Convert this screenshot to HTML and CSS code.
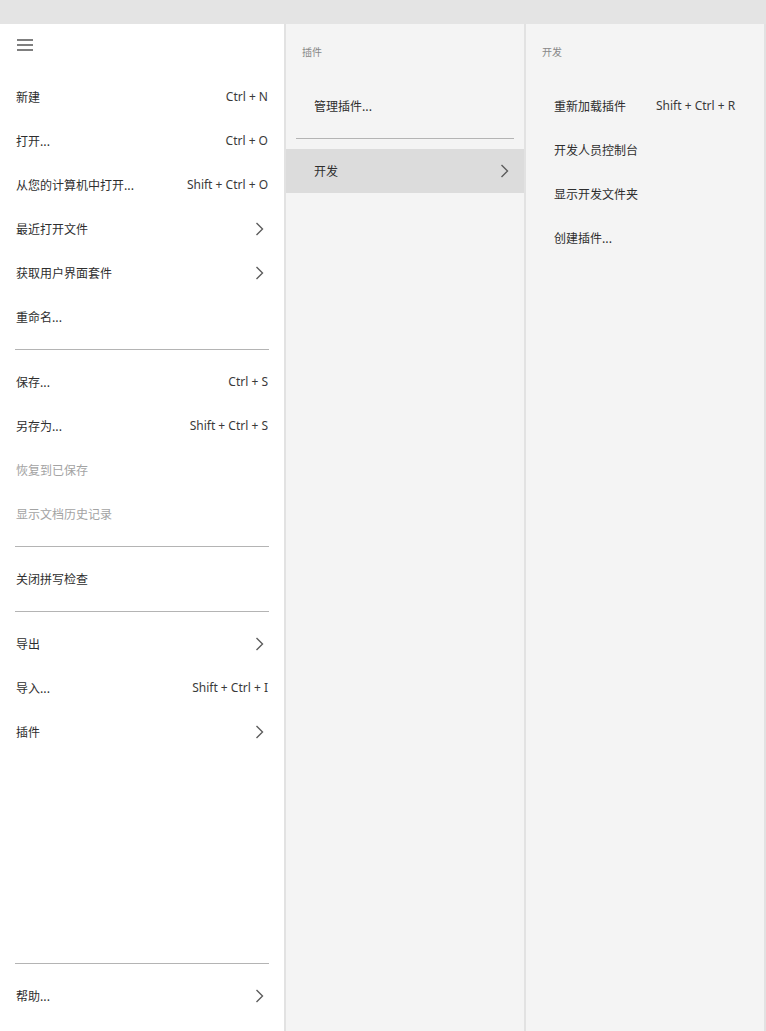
FILE: index.html
```html
<!DOCTYPE html>
<html lang="zh-CN">

<head>
    <meta charset="UTF-8">
    <meta name="viewport" content="width=device-width, initial-scale=1.0">
    <title>菜单</title>
    <link rel="stylesheet" href="styles.css">
</head>

<body>
    <div class="topbar"></div>

    <div class="panels">

        <!-- 主菜单 -->
        <div class="panel main">
            <div class="main-head">
                <svg class="burger" width="16" height="12" viewBox="0 0 16 12">
                    <path d="M0 1H16M0 6H16M0 11H16" stroke="#555" stroke-width="1.5" fill="none" />
                </svg>
            </div>

            <div class="item"><span>新建</span><span class="key">Ctrl + N</span></div>
            <div class="item"><span>打开...</span><span class="key">Ctrl + O</span></div>
            <div class="item"><span>从您的计算机中打开...</span><span class="key">Shift + Ctrl + O</span></div>
            <div class="item"><span>最近打开文件</span>
                <svg class="arrow" width="12" height="14" viewBox="0 0 12 14"><path d="M2.5 1L8.5 7L2.5 13" /></svg>
            </div>
            <div class="item"><span>获取用户界面套件</span>
                <svg class="arrow" width="12" height="14" viewBox="0 0 12 14"><path d="M2.5 1L8.5 7L2.5 13" /></svg>
            </div>
            <div class="item"><span>重命名...</span></div>

            <div class="line"></div>

            <div class="item"><span>保存...</span><span class="key">Ctrl + S</span></div>
            <div class="item"><span>另存为...</span><span class="key">Shift + Ctrl + S</span></div>
            <div class="item off"><span>恢复到已保存</span></div>
            <div class="item off"><span>显示文档历史记录</span></div>

            <div class="line"></div>

            <div class="item"><span>关闭拼写检查</span></div>

            <div class="line"></div>

            <div class="item"><span>导出</span>
                <svg class="arrow" width="12" height="14" viewBox="0 0 12 14"><path d="M2.5 1L8.5 7L2.5 13" /></svg>
            </div>
            <div class="item"><span>导入...</span><span class="key">Shift + Ctrl + I</span></div>
            <div class="item"><span>插件</span>
                <svg class="arrow" width="12" height="14" viewBox="0 0 12 14"><path d="M2.5 1L8.5 7L2.5 13" /></svg>
            </div>

            <div class="main-foot">
                <div class="line"></div>
                <div class="item"><span>帮助...</span>
                    <svg class="arrow" width="12" height="14" viewBox="0 0 12 14"><path d="M2.5 1L8.5 7L2.5 13" /></svg>
                </div>
            </div>
        </div>

        <!-- 插件 子菜单 -->
        <div class="panel sub">
            <p class="sub-title">插件</p>
            <div class="item"><span>管理插件...</span></div>
            <div class="line"></div>
            <div class="item active"><span>开发</span>
                <svg class="arrow" width="12" height="14" viewBox="0 0 12 14"><path d="M2.5 1L8.5 7L2.5 13" /></svg>
            </div>
        </div>

        <!-- 开发 子菜单 -->
        <div class="panel sub">
            <p class="sub-title">开发</p>
            <div class="item left"><span class="name">重新加载插件</span><span class="key">Shift + Ctrl + R</span></div>
            <div class="item"><span>开发人员控制台</span></div>
            <div class="item"><span>显示开发文件夹</span></div>
            <div class="item"><span>创建插件...</span></div>
        </div>

    </div>
</body>

</html>
```

FILE: styles.css
```css
* {
    box-sizing: border-box;
}

body {
    margin: 0;
    height: 1031px;
    display: flex;
    flex-direction: column;
    font-family: "Noto Sans", "Noto Sans CJK SC", sans-serif;
    font-size: 12px;
    color: #2e2e2e;
    background: #e4e4e4;
    overflow: hidden;
}

.topbar {
    height: 24px;
    background: #e4e4e4;
}

.panels {
    flex: 1;
    display: flex;
}

.panel {
    display: flex;
    flex-direction: column;
    border-right: 2px solid #e2e2e2;
}

.main {
    width: 286px;
    background: #fff;
    padding: 0 16px 13px 16px;
}

.sub {
    width: 240px;
    background: #f4f4f4;
}

.main-head {
    height: 51px;
    padding-top: 15px;
}

.burger {
    display: block;
    margin-left: 1px;
}

.item {
    height: 44px;
    padding-bottom: 1px;
    display: flex;
    align-items: center;
    justify-content: space-between;
    font-family: "Noto Sans CJK SC", sans-serif;
}

.key {
    font-family: "Noto Sans", "Open Sans", sans-serif;
    font-size: 12px;
    color: #3a3a3a;
}

.off {
    color: #a3a3a3;
}

.arrow {
    display: block;
    margin-right: 2px;
}

.arrow path {
    fill: none;
    stroke: #5c5c5c;
    stroke-width: 1.4;
}

.line {
    height: 1px;
    margin: 10px 0;
    background: #b4b4b4;
}

.main .line {
    margin-left: -1px;
    margin-right: -1px;
}

.main-foot {
    margin-top: auto;
}

.sub-title {
    margin: 0;
    height: 60px;
    padding: 20px 16px 0;
    font-family: "Noto Sans CJK SC", sans-serif;
    font-size: 10px;
    color: #888;
}

.sub .item {
    padding: 0 16px 1px 28px;
}

.sub .arrow {
    margin-right: -3px;
}

.sub .line {
    margin: 10px 10px;
}

.sub .active {
    background: #dcdcdc;
}

.sub .left {
    justify-content: flex-start;
    gap: 30px;
}
```
